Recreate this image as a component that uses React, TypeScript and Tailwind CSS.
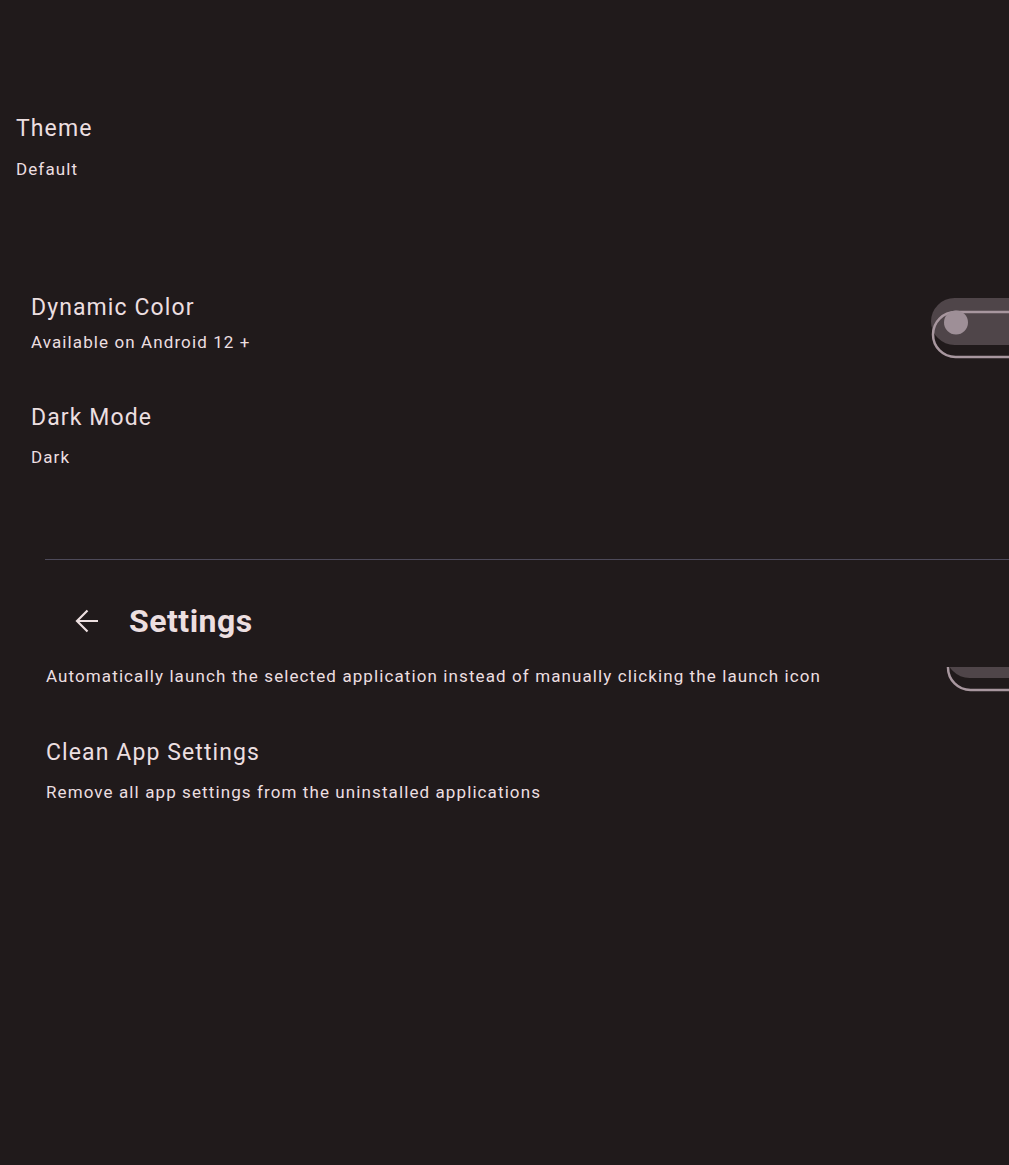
import { type FC } from 'react';

// Material-ish switch, drawn the way the screenshot shows it (track offset from the outline)
const OffsetSwitch: FC = () => (
  <svg width="78" height="62" viewBox="0 0 78 62" className="shrink-0">
    <rect x="0" y="1" width="110" height="47" rx="23.5" fill="#4f4549" />
    <rect x="2" y="15" width="110" height="45" rx="22.5" fill="none" stroke="#a8979f" strokeWidth="2.5" />
    <circle cx="25" cy="25.5" r="12" fill="#9e8f97" />
  </svg>
);

// Only the lower part of the second switch shows below the top bar
const ClippedSwitch: FC = () => (
  <svg width="63" height="25" viewBox="0 0 63 25" className="shrink-0">
    <rect x="0" y="-36" width="110" height="47" rx="23.5" fill="#4f4549" />
    <rect x="2" y="-22" width="110" height="45" rx="22.5" fill="none" stroke="#a8979f" strokeWidth="2.5" />
  </svg>
);

const BackArrow: FC = () => (
  <svg width="24" height="24" viewBox="0 0 24 24" fill="none" stroke="#ecdfe0" strokeWidth="2.2">
    <path d="M23 12H2M12.5 1.5L2 12l10.5 10.5" />
  </svg>
);

const title = 'text-[23px] leading-[28px] tracking-[1.1px]';
const sub = 'text-[17px] leading-[24px] tracking-[1.1px]';

export default function App() {
  return (
    <div className="h-[1165px] w-[1009px] overflow-hidden bg-[#201a1b] font-['Roboto',sans-serif] text-[#ecdfe0]">
      {/* Theme */}
      <div className="pl-4 pt-[115px]">
        <div className={title}>Theme</div>
        <div className={`mt-[14px] ${sub}`}>Default</div>
      </div>

      {/* Dynamic Color */}
      <div className="mt-[113px] flex items-start justify-between pl-[31px]">
        <div>
          <div className={title}>Dynamic Color</div>
          <div className={`mt-[8px] ${sub}`}>Available on Android 12 +</div>
        </div>
        <div className="mt-[3px]">
          <OffsetSwitch />
        </div>
      </div>

      {/* Dark Mode */}
      <div className="mt-[45px] pl-[31px]">
        <div className={title}>Dark Mode</div>
        <div className={`mt-[13px] ${sub}`}>Dark</div>
      </div>

      {/* divider */}
      <div className="ml-[45px] mt-[90px] h-px bg-[#4d4a5a]" />

      {/* Top bar */}
      <div className="mt-[29px] flex h-[64px] items-center pl-[75px]">
        <BackArrow />
        <div className="ml-[30px] text-[32px] font-bold leading-[36px] tracking-[0.5px]">Settings</div>
      </div>

      {/* Auto launch */}
      <div className="mt-[11px] flex items-start justify-between pl-[46px]">
        <div className={sub}>
          Automatically launch the selected application instead of manually clicking the launch icon
        </div>
        <div className="mt-[3px]">
          <ClippedSwitch />
        </div>
      </div>

      {/* Clean App Settings */}
      <div className="mt-[47px] pl-[46px]">
        <div className={title}>Clean App Settings</div>
        <div className={`mt-[13px] ${sub}`}>Remove all app settings from the uninstalled applications</div>
      </div>
    </div>
  );
}
